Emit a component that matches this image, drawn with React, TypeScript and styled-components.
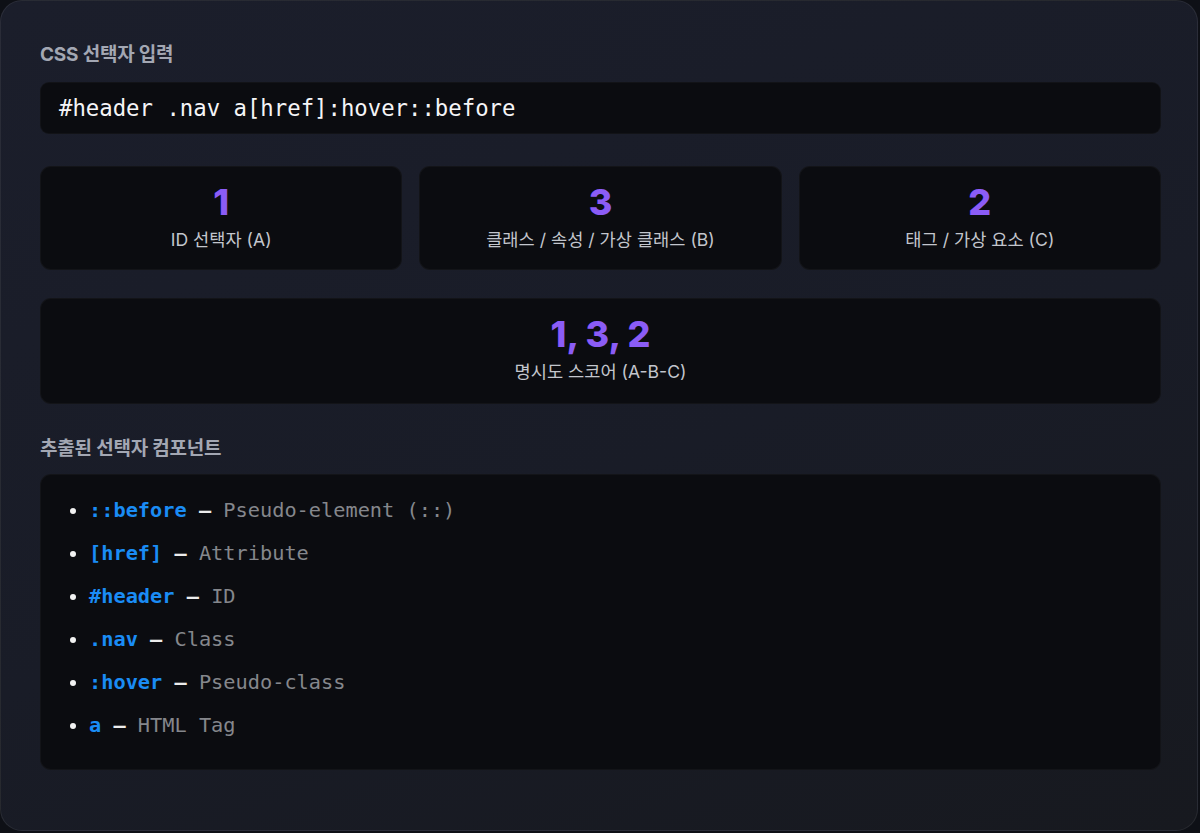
import styled, { createGlobalStyle } from "styled-components";

const GlobalStyle = createGlobalStyle`
    html, body {
        margin: 0;
        padding: 0;
        background: #0e1016;
    }
    body {
        font-family: Inter, "Noto Sans CJK KR", sans-serif;
    }
`

const SPanel = styled.div`
    box-sizing: border-box;
    width: 1198px;
    height: 831px;
    padding: 40px 36px 0 39px;
    border: 1px solid rgba(255, 255, 255, 0.07);
    border-radius: 22px;
    background: linear-gradient(160deg, #1b1e2b 0%, #191c27 55%, #17191f 100%);
    display: flex;
    flex-direction: column;
`

const SLabel = styled.h3<{ $gap: number }>`
    margin: 0 0 ${p => p.$gap}px 0;
    font-size: 19px;
    line-height: 27px;
    font-weight: 700;
    color: #a3a7b3;
    letter-spacing: -0.2px;
`

const SInput = styled.div`
    box-sizing: border-box;
    height: 52px;
    padding: 0 18px;
    display: flex;
    align-items: center;
    background: #0b0c10;
    border: 1px solid rgba(255, 255, 255, 0.03);
    border-radius: 9px;
    font-family: "DejaVu Sans Mono", monospace;
    font-size: 22.3px;
    color: #f5f5f7;
    margin-bottom: 32px;
`

const SStats = styled.div`
    display: grid;
    grid-template-columns: repeat(3, 1fr);
    gap: 17px;
    margin-bottom: 28px;
`

const SStatCard = styled.div<{ $tall?: boolean }>`
    box-sizing: border-box;
    height: ${p => (p.$tall ? 106 : 104)}px;
    padding-top: 17px;
    display: flex;
    flex-direction: column;
    align-items: center;
    background: #0b0c10;
    border: 1px solid rgba(255, 255, 255, 0.035);
    border-radius: 11px;

    .value {
        font-size: 36px;
        line-height: 36px;
        font-weight: 800;
        color: #8b5cf6;
        margin-bottom: 8px;
    }

    .caption {
        font-size: 17.6px;
        line-height: 24px;
        color: #c3c6cd;
    }
`

const SScore = styled(SStatCard)`
    margin-bottom: 31px;
`

const SList = styled.ul`
    box-sizing: border-box;
    margin: 12px 0 0 0;
    padding: 20px 28px 29px 48px;
    background: #0b0c10;
    border: 1px solid rgba(255, 255, 255, 0.035);
    border-radius: 11px;
    font-family: "DejaVu Sans Mono", monospace;
    font-size: 20.3px;
    color: #f2f2f2;

    li {
        line-height: 30px;
        margin-bottom: 13px;
    }

    li:last-child {
        margin-bottom: 0;
    }

    .token {
        font-weight: 700;
        color: #1a8cf5;
    }

    .dash {
        font-weight: 700;
        color: #ececec;
    }

    .kind {
        color: #85878c;
    }
`

const components = [
    { token: "::before", kind: "Pseudo-element (::)" },
    { token: "[href]", kind: "Attribute" },
    { token: "#header", kind: "ID" },
    { token: ".nav", kind: "Class" },
    { token: ":hover", kind: "Pseudo-class" },
    { token: "a", kind: "HTML Tag" },
]

const stats = [
    { value: "1", caption: "ID 선택자 (A)" },
    { value: "3", caption: "클래스 / 속성 / 가상 클래스 (B)" },
    { value: "2", caption: "태그 / 가상 요소 (C)" },
]

const App = () => {
    return (
        <>
            <GlobalStyle />
            <SPanel>
                <SLabel $gap={14}>CSS 선택자 입력</SLabel>
                <SInput>#header .nav a[href]:hover::before</SInput>

                <SStats>
                    {stats.map(s => (
                        <SStatCard key={s.caption}>
                            <span className="value">{s.value}</span>
                            <span className="caption">{s.caption}</span>
                        </SStatCard>
                    ))}
                </SStats>

                <SScore $tall>
                    <span className="value">1, 3, 2</span>
                    <span className="caption">명시도 스코어 (A-B-C)</span>
                </SScore>

                <SLabel $gap={0}>추출된 선택자 컴포넌트</SLabel>
                <SList>
                    {components.map(c => (
                        <li key={c.token}>
                            <span className="token">{c.token}</span>
                            <span className="dash"> — </span>
                            <span className="kind">{c.kind}</span>
                        </li>
                    ))}
                </SList>
            </SPanel>
        </>
    )
}

export default App;
